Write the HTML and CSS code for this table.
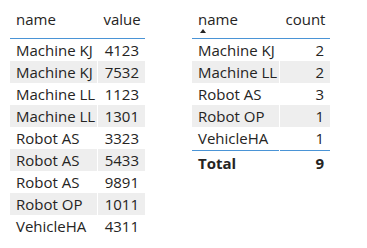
FILE: index.html
```html
<!DOCTYPE html>
<html>
<head>
<meta charset="utf-8">
<link rel="stylesheet" href="styles.css">
</head>
<body>
<div class="page">
  <table class="grid grid-left">
    <colgroup><col class="c-name"><col class="c-val"></colgroup>
    <thead>
      <tr><th class="h-name">name</th><th class="h-num">value</th></tr>
    </thead>
    <tbody>
      <tr><td>Machine KJ</td><td class="num">4123</td></tr>
      <tr class="alt"><td>Machine KJ</td><td class="num">7532</td></tr>
      <tr><td>Machine LL</td><td class="num">1123</td></tr>
      <tr class="alt"><td>Machine LL</td><td class="num">1301</td></tr>
      <tr><td>Robot AS</td><td class="num">3323</td></tr>
      <tr class="alt"><td>Robot AS</td><td class="num">5433</td></tr>
      <tr><td>Robot AS</td><td class="num">9891</td></tr>
      <tr class="alt"><td>Robot OP</td><td class="num">1011</td></tr>
      <tr><td>VehicleHA</td><td class="num">4311</td></tr>
    </tbody>
  </table>
  <table class="grid grid-right">
    <colgroup><col class="c-name"><col class="c-count"></colgroup>
    <thead>
      <tr><th class="h-name sorted">name<span class="sort-arrow"></span></th><th class="h-num">count</th></tr>
    </thead>
    <tbody>
      <tr><td>Machine KJ</td><td class="num">2</td></tr>
      <tr class="alt"><td>Machine LL</td><td class="num">2</td></tr>
      <tr><td>Robot AS</td><td class="num">3</td></tr>
      <tr class="alt"><td>Robot OP</td><td class="num">1</td></tr>
      <tr><td>VehicleHA</td><td class="num">1</td></tr>
    </tbody>
    <tfoot>
      <tr class="total"><td>Total</td><td class="num">9</td></tr>
    </tfoot>
  </table>
</div>
</body>
</html>
```
FILE: styles.css
```css
html, body {
  margin: 0;
  padding: 0;
  background: #ffffff;
}
body {
  font-family: "Open Sans", "Noto Sans", sans-serif;
  font-size: 15px;
  color: #252423;
}
.page {
  display: flex;
  align-items: flex-start;
  gap: 47px;
  padding-left: 10px;
}
.grid {
  border-collapse: collapse;
  table-layout: fixed;
}
.grid-left { width: 135px; }
.grid-right { width: 138px; }
.c-name { width: 87px; }
.c-val { width: 48px; }
.c-count { width: 51px; }
.grid th {
  font-weight: normal;
  text-align: left;
  height: 38px;
  padding: 9px 6px 0;
  vertical-align: top;
  line-height: 20px;
  box-sizing: border-box;
  border-bottom: 1px solid #4a94d6;
  border-right: 1px solid #ffffff;
  position: relative;
}
.grid th.h-num { text-align: right; }
.grid td {
  height: 22px;
  padding: 0 6px;
  line-height: 22px;
  box-sizing: border-box;
  white-space: nowrap;
  border-right: 1px solid #ffffff;
}
.grid th:last-child, .grid td:last-child { border-right: none; }
.grid td.num { text-align: right; }
.grid tr.alt td { background: #eeeeee; }
.sort-arrow {
  position: absolute;
  left: 8px;
  top: 29px;
  width: 0;
  height: 0;
  border-left: 3.5px solid transparent;
  border-right: 3.5px solid transparent;
  border-bottom: 4px solid #252423;
}
.grid tbody tr:last-child td { height: 24px; }
.grid-left tbody tr:last-child td { height: 22px; }
.grid tfoot td {
  border-top: 1px solid #4a94d6;
  font-weight: bold;
  height: 24px;
}
```
